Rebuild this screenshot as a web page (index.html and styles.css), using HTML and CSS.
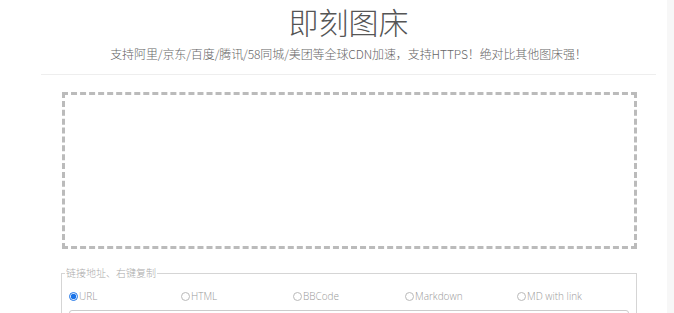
FILE: index.html
```html
<!DOCTYPE html>
<html lang="zh-CN">
<head>
  <meta charset="UTF-8">
  <title>即刻图床</title>
  <link rel="stylesheet" href="styles.css">
</head>
<body>
  <div class="page">
    <div class="container">
      <h1 class="title">即刻图床</h1>
      <p class="subtitle">支持阿里/京东/百度/腾讯/58同城/美团等全球CDN加速，支持HTTPS！绝对比其他图床强！</p>
      <hr class="line">

      <div class="dropzone"></div>

      <fieldset class="links">
        <legend>链接地址、右键复制</legend>
        <div class="types">
          <label><input type="radio" name="type" checked>URL</label>
          <label><input type="radio" name="type">HTML</label>
          <label><input type="radio" name="type">BBCode</label>
          <label><input type="radio" name="type">Markdown</label>
          <label><input type="radio" name="type">MD with link</label>
        </div>
        <div class="result"></div>
      </fieldset>
    </div>
  </div>
  <div class="scrollbar"></div>
</body>
</html>
```

FILE: styles.css
```css
html, body {
  height: 100%;
}
body {
  margin: 0;
  display: flex;
  overflow: hidden;
  font-family: "Noto Sans CJK SC", "Open Sans", sans-serif;
  color: #555;
  background: #fff;
}
.page {
  flex: 1;
}
.scrollbar {
  width: 7px;
  background: #f7f7f7;
}
.container {
  width: 615px;
  margin-left: 41px;
}
.title {
  margin: 0;
  padding-top: 2px;
  font-size: 30px;
  font-weight: 300;
  line-height: 38px;
  text-align: center;
  color: #555;
}
.subtitle {
  margin: 5px 0 0;
  font-size: 12px;
  font-weight: 300;
  letter-spacing: -0.1px;
  line-height: 18px;
  text-align: center;
  color: #666;
}
.line {
  margin: 11px 0 0;
  border: none;
  border-top: 1px solid #eee;
}
.dropzone {
  margin: 17px 19px 0 21px;
  height: 151px;
  border: 3px dashed #bbb;
}
.links {
  margin: 18px 21px 0 20px;
  padding: 0 7px;
  border: 1px solid #d5d5d5;
}
.links legend {
  padding: 0 1px;
  margin-left: -4px;
  font-size: 10px;
  font-weight: 300;
  line-height: 12px;
  color: #aaa;
}
.types {
  display: grid;
  grid-template-columns: repeat(5, 112px);
  padding-top: 10px;
}
.types label {
  display: flex;
  align-items: center;
  font-family: "Open Sans", sans-serif;
  font-size: 10px;
  font-weight: 300;
  color: #999;
}
.types input {
  margin: 0 1px 0 0;
  width: 9px;
  height: 9px;
  accent-color: #1a73e8;
}
.types input:not(:checked) {
  opacity: 0.5;
}
.result {
  margin-top: 7px;
  height: 40px;
  border: 1px solid #ccc;
  border-radius: 3px;
}
```
